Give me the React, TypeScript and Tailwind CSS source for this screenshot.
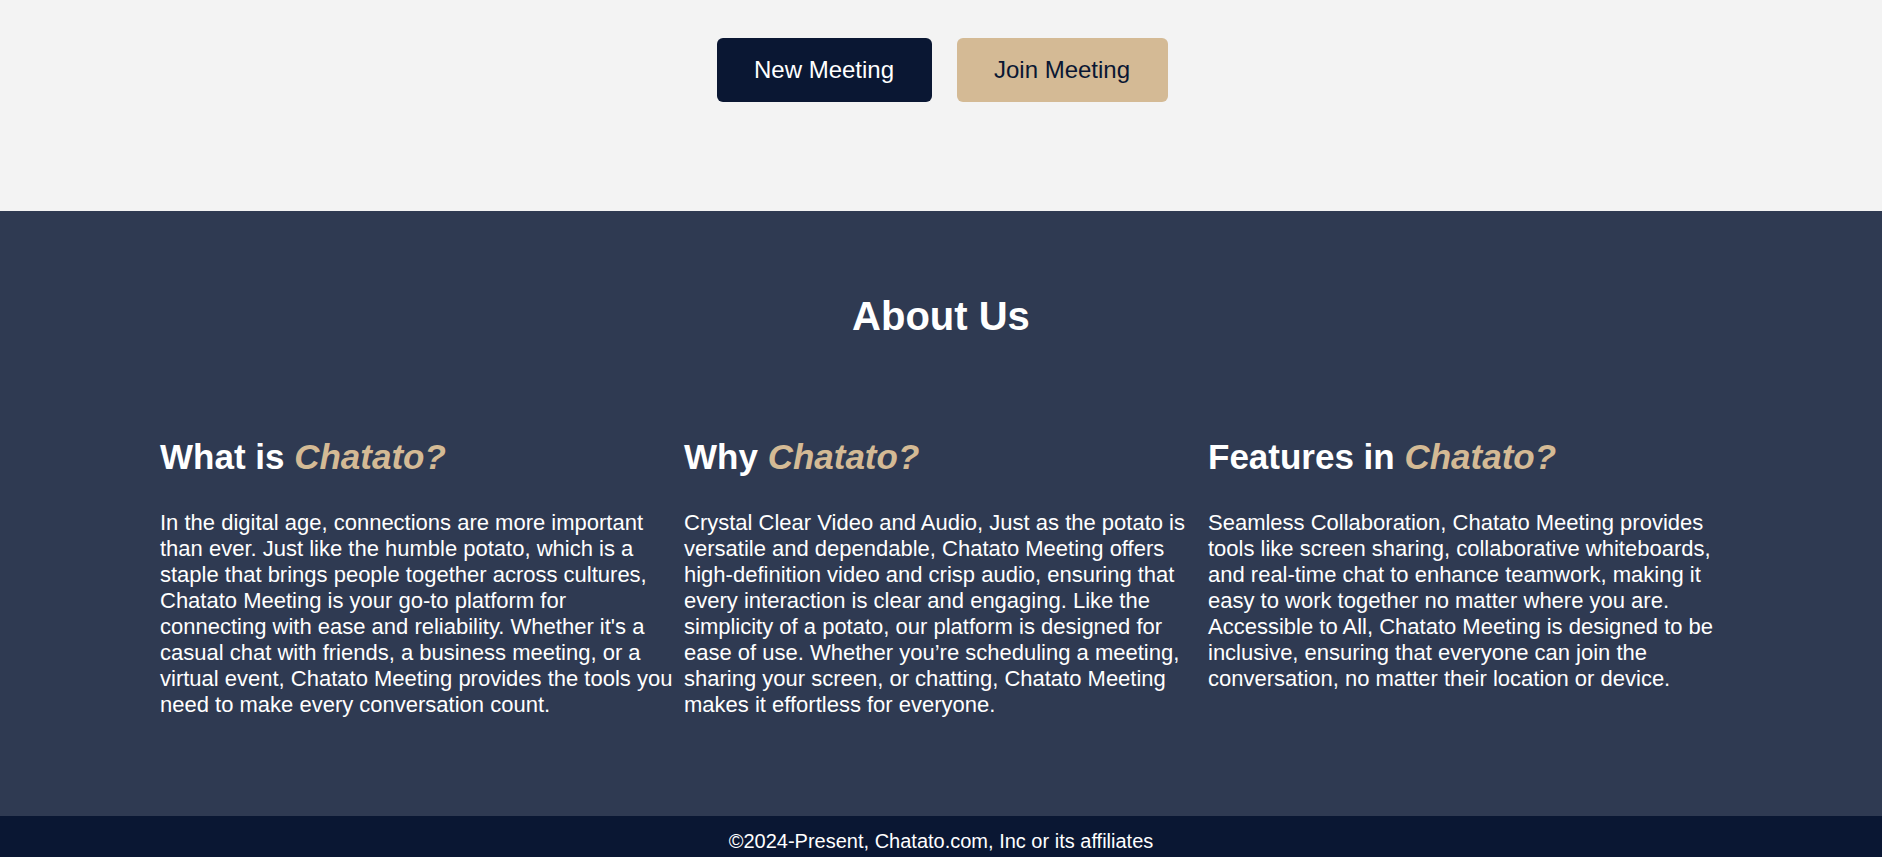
import React from "react"

const cols = [
  {
    lead: "What is",
    body: "In the digital age, connections are more important than ever. Just like the humble potato, which is a staple that brings people together across cultures, Chatato Meeting is your go-to platform for connecting with ease and reliability. Whether it's a casual chat with friends, a business meeting, or a virtual event, Chatato Meeting provides the tools you need to make every conversation count.",
  },
  {
    lead: "Why",
    body: "Crystal Clear Video and Audio, Just as the potato is versatile and dependable, Chatato Meeting offers high-definition video and crisp audio, ensuring that every interaction is clear and engaging. Like the simplicity of a potato, our platform is designed for ease of use. Whether you\u2019re scheduling a meeting, sharing your screen, or chatting, Chatato Meeting makes it effortless for everyone.",
  },
  {
    lead: "Features in",
    body: "Seamless Collaboration, Chatato Meeting provides tools like screen sharing, collaborative whiteboards, and real-time chat to enhance teamwork, making it easy to work together no matter where you are. Accessible to All, Chatato Meeting is designed to be inclusive, ensuring that everyone can join the conversation, no matter their location or device.",
  },
]

function App() {
  return (
    <div className="w-full h-[857px] overflow-hidden flex flex-col font-['Liberation_Sans',Arial,sans-serif]">
      {/* top / buttons */}
      <div className="h-[211px] shrink-0 bg-[#f3f3f3] pt-[38px] pl-[2px] flex flex-row justify-center items-start gap-[25px]">
        <button className="bg-[#0a1733] text-white text-2xl leading-8 py-4 w-[215px] rounded-md">
          New Meeting
        </button>
        <button className="bg-[#d4ba95] text-[#0a1733] text-2xl leading-8 py-4 w-[211px] rounded-md">
          Join Meeting
        </button>
      </div>

      {/* about */}
      <div className="h-[605px] shrink-0 bg-[#2f3a52] text-white pt-[81px]">
        <h2 className="text-center text-[40px] leading-[48px] font-bold">About Us</h2>
        <div className="grid grid-cols-[515px_515px_515px] gap-x-[9px] pl-[160px] mt-[97px]">
          {cols.map((c) => (
            <div key={c.lead}>
              <h3 className="text-[35px] leading-10 font-bold">
                {c.lead} <i className="text-[#d4ba95]">Chatato?</i>
              </h3>
              <p className="mt-[33px] text-[22px] leading-[26px]">{c.body}</p>
            </div>
          ))}
        </div>
      </div>

      {/* footer */}
      <div className="h-[41px] shrink-0 bg-[#0a1733] text-white text-center text-xl leading-7 pt-[11px]">
        ©2024-Present, Chatato.com, Inc or its affiliates
      </div>
    </div>
  )
}

export default App
